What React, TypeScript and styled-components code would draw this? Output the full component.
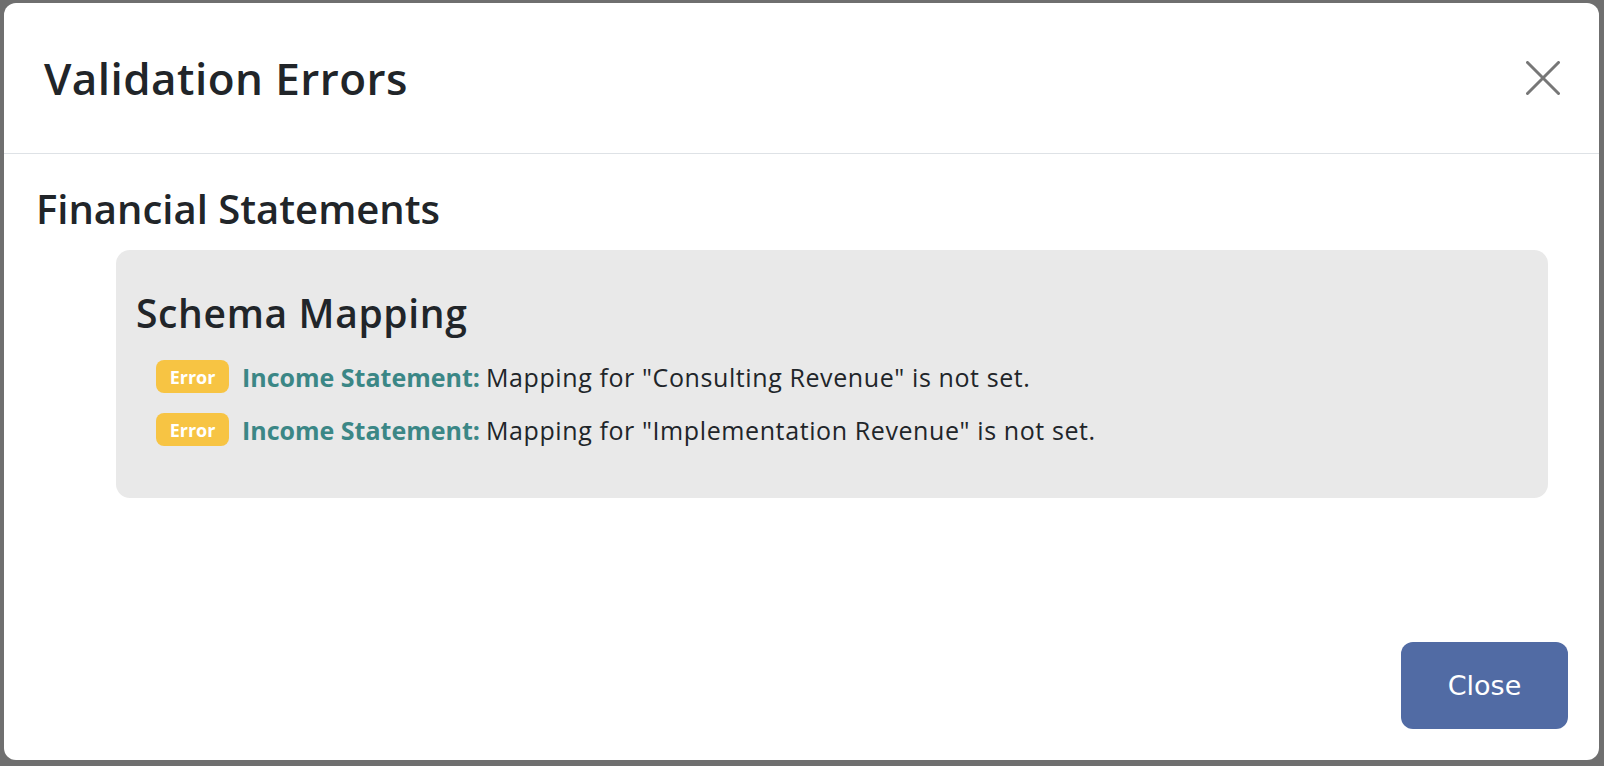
import React from 'react';
import styled, { createGlobalStyle } from 'styled-components';

const GlobalStyle = createGlobalStyle`
  html, body {
    margin: 0;
    padding: 0;
    height: 100%;
  }
  body {
    font-family: "Open Sans", "Liberation Sans", sans-serif;
    color: #212529;
    background: #ffffff;
  }
`;

const Backdrop = styled.div`
  position: fixed;
  inset: 0;
  background: #6f6f6f;
  display: flex;
  align-items: center;
  justify-content: center;
`;

const Dialog = styled.div`
  width: 1595px;
  height: 757px;
  margin: 0 1px 3px 0;
  background: #ffffff;
  border-radius: 12px;
  display: flex;
  flex-direction: column;
  overflow: hidden;
`;

const Header = styled.div`
  height: 150px;
  flex-shrink: 0;
  display: flex;
  align-items: center;
  justify-content: space-between;
  padding: 0 39px 0 40px;
  border-bottom: 1px solid #dee2e6;
`;

const Title = styled.h1`
  margin: 0;
  font-size: 44px;
  line-height: 1;
  font-weight: 600;
  letter-spacing: 0.45px;
  color: #212529;
`;

const CloseIcon = styled.button`
  width: 34px;
  height: 34px;
  padding: 0;
  border: none;
  background: none;
  cursor: pointer;
  display: flex;
  align-items: center;
  justify-content: center;
`;

const Body = styled.div`
  flex: 1;
  padding: 35px 32px 0 32px;
`;

const SectionTitle = styled.h2`
  margin: 0 0 21px;
  font-size: 40px;
  line-height: 1;
  font-weight: 600;
  color: #212529;
`;

const Panel = styled.div`
  margin: 0 19px 0 80px;
  padding: 43px 20px 48px 20px;
  background: #e9e9e9;
  border-radius: 14px;
`;

const PanelTitle = styled.h3`
  margin: 0 0 24px;
  font-size: 39px;
  line-height: 1;
  font-weight: 600;
  letter-spacing: 0.65px;
  color: #212529;
`;

const ErrorList = styled.ul`
  list-style: none;
  margin: 0;
  padding: 0 0 0 20px;
  display: flex;
  flex-direction: column;
  gap: 12px;
`;

const ErrorRow = styled.li`
  height: 41px;
  display: flex;
  align-items: center;
  gap: 13px;
  font-size: 25px;
  color: #212529;
`;

const Badge = styled.span<{ $tone: 'warning' | 'danger' }>`
  width: 73px;
  height: 33px;
  border-radius: 8px;
  background: ${(p) => (p.$tone === 'warning' ? '#f7c443' : '#dc3545')};
  color: #ffffff;
  font-size: 18px;
  font-weight: 700;
  display: inline-flex;
  align-items: center;
  justify-content: center;
  flex-shrink: 0;
`;

const Source = styled.strong`
  color: #3b8786;
  font-weight: 700;
  margin-right: 6px;
`;

const Message = styled.span`
  letter-spacing: 0.6px;
`;

const Footer = styled.div`
  display: flex;
  justify-content: flex-end;
  padding: 0 31px 31px 0;
`;

const CloseButton = styled.button`
  width: 167px;
  height: 87px;
  border: none;
  border-radius: 12px;
  background: #516ba4;
  color: #ffffff;
  font-family: "DejaVu Sans", sans-serif;
  font-size: 27px;
  cursor: pointer;
`;

type ValidationError = { source: string; message: string };

const errors: ValidationError[] = [
  { source: 'Income Statement:', message: 'Mapping for "Consulting Revenue" is not set.' },
  { source: 'Income Statement:', message: 'Mapping for "Implementation Revenue" is not set.' },
];

const App: React.FC = () => {
  return (
    <>
      <GlobalStyle />
      <Backdrop>
        <Dialog role="dialog">
          <Header>
            <Title>Validation Errors</Title>
            <CloseIcon aria-label="Close">
              <svg width="34" height="34" viewBox="0 0 34 34">
                <path d="M1.5 1.5 L32.5 32.5 M32.5 1.5 L1.5 32.5" stroke="#777777" strokeWidth="3" strokeLinecap="round" />
              </svg>
            </CloseIcon>
          </Header>
          <Body>
            <SectionTitle>Financial Statements</SectionTitle>
            <Panel>
              <PanelTitle>Schema Mapping</PanelTitle>
              <ErrorList>
                {errors.map((e, i) => (
                  <ErrorRow key={i}>
                    <Badge $tone="warning">Error</Badge>
                    <span>
                      <Source>{e.source}</Source>
                      <Message>{e.message}</Message>
                    </span>
                  </ErrorRow>
                ))}
              </ErrorList>
            </Panel>
          </Body>
          <Footer>
            <CloseButton>Close</CloseButton>
          </Footer>
        </Dialog>
      </Backdrop>
    </>
  );
};

export default App;
